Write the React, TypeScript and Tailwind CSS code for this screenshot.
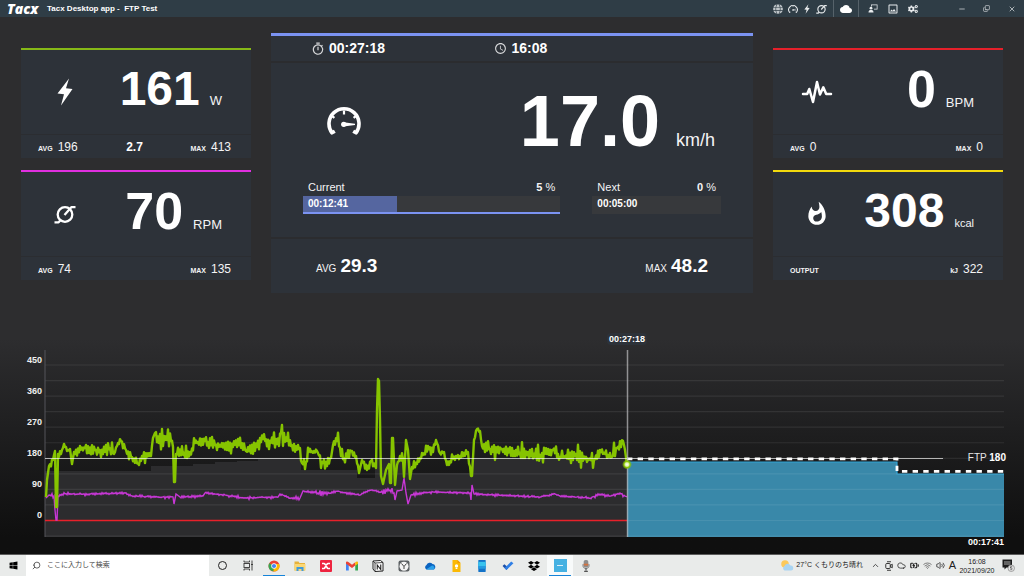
import type { ReactNode } from "react";
import {
  MdCloud,
  MdOutlineInsertPhoto,
  MdOutlineTimer,
  MdSchedule,
  MdWhatshot,
} from "react-icons/md";
import { FaCogs, FaDropbox, FaGlobe, FaWindows } from "react-icons/fa";
import {
  BatteryCharging,
  ChevronUp,
  Cloud,
  Copy,
  Minus,
  Search,
  Volume2,
  Wifi,
  X,
} from "lucide-react";

// ---------------------------------------------------------------------------
// Icons
// ---------------------------------------------------------------------------

type IconProps = { className?: string };

function BoltIcon({ className }: IconProps) {
  return (
    <svg viewBox="0 0 16 28" className={className} fill="currentColor" aria-hidden="true">
      <path d="M12 0.5 L0.5 15.5 L7 16.3 L4 27.5 L15.5 11 L9 10.2 Z" />
    </svg>
  );
}

function CrankIcon({ className }: IconProps) {
  return (
    <svg viewBox="0 0 22 20" className={className} fill="none" stroke="currentColor" strokeWidth="2.3" strokeLinejoin="round" aria-hidden="true">
      <circle cx="11" cy="10.5" r="7.3" />
      <path d="M10.5 11 L17.3 3.2 H21.5" />
      <path d="M6.3 16.5 L4.6 18.3 H0.5" />
    </svg>
  );
}

function GaugeIcon({ className }: IconProps) {
  return (
    <svg viewBox="0 0 34 28" className={className} fill="none" stroke="currentColor" aria-hidden="true">
      <path d="M7.8 24.2 L5 25.8 A15 15 0 1 1 29 25.8 L26.2 24.2" strokeWidth="3.6" strokeLinejoin="round" />
      <path d="M17 3.5 V7.5 M7.4 10.8 L5 9 M26.6 10.8 L29 9" strokeWidth="2.2" />
      <circle cx="16.7" cy="17.3" r="2.6" fill="currentColor" stroke="none" />
      <path d="M16.5 15.3 L28 16.7 V18.1 L16.5 19.5 Z" fill="currentColor" stroke="none" />
    </svg>
  );
}

function PulseIcon({ className }: IconProps) {
  return (
    <svg viewBox="0 0 32 24" className={className} fill="none" stroke="currentColor" strokeWidth="2.5" strokeLinecap="round" strokeLinejoin="round" aria-hidden="true">
      <path d="M2 14 H6.2 L8.3 9 L12 22 L16 2 L19 14.5 L22.3 7.3 L25.2 14 H30" />
    </svg>
  );
}

function TrainerIcon({ className }: IconProps) {
  return (
    <svg viewBox="0 0 20 18" className={className} fill="currentColor" aria-hidden="true">
      <path d="M6 1 H19 V11 H12 V9.5 H17.5 V2.5 H7.5 V5 H6 Z" />
      <circle cx="6" cy="8.3" r="2.8" />
      <path d="M1 17 C1 13 3 12 6 12 C9 12 11 13 11 17 Z" />
    </svg>
  );
}

function ChromeIcon() {
  return (
    <svg viewBox="0 0 24 24" className="size-3" aria-hidden="true">
      <circle cx="12" cy="12" r="11" fill="#ea4335" />
      <path d="M12 12 L2.5 6.5 A11 11 0 0 0 11 23 Z" fill="#34a853" />
      <path d="M12 12 L11 23 A11 11 0 0 0 22.4 8 L12 8 Z" fill="#fbbc04" />
      <circle cx="12" cy="12" r="5.5" fill="#fff" />
      <circle cx="12" cy="12" r="4.2" fill="#4285f4" />
    </svg>
  );
}

function ExplorerIcon() {
  return (
    <svg viewBox="0 0 24 22" className="size-3" aria-hidden="true">
      <path d="M1 2 H9 L11 5 H22 V20 H1 Z" fill="#e8b33c" />
      <path d="M1 7 H23 V20 H1 Z" fill="#fbd775" />
      <path d="M5 21 V13 H19 V21 H15 V17 H9 V21 Z" fill="#3f9bdc" />
    </svg>
  );
}

function MindIcon() {
  return (
    <svg viewBox="0 0 24 24" className="size-3" aria-hidden="true">
      <rect width="24" height="24" rx="2" fill="#ee2440" />
      <path d="M4 7 H8 C10 7 10 10 12 10 C14 10 14 7 16 7 H20 M4 17 H8 C10 17 10 13 12 13 C14 13 14 17 16 17 H20" fill="none" stroke="#fff" strokeWidth="3.4" />
    </svg>
  );
}

function GmailIcon() {
  return (
    <svg viewBox="0 0 24 18" className="h-2.5 w-3" aria-hidden="true">
      <path d="M0 2 V18 H5.5 V7 Z" fill="#4285f4" />
      <path d="M24 2 V18 H18.5 V7 Z" fill="#34a853" />
      <path d="M0 2 C0 0 3 -1 5.5 1.5 L12 6.5 L18.5 1.5 V8 L12 13 L0 4.5 Z" fill="#ea4335" />
      <path d="M18.5 1.5 C21 -1 24 0 24 2 V4.5 L18.5 8.5 Z" fill="#fbbc04" />
    </svg>
  );
}

function NotionIcon() {
  return (
    <svg viewBox="0 0 24 24" className="size-3" aria-hidden="true">
      <path d="M2 2 L17 1 L22 5 V22 L6 23 L2 18 Z" fill="#fff" stroke="#222" strokeWidth="2" />
      <path d="M2 2 L6 6 L22 5 M6 6 V23" fill="none" stroke="#222" strokeWidth="1.6" />
      <path d="M10.5 19 V10 L17.5 19 V9" fill="none" stroke="#222" strokeWidth="2.2" />
    </svg>
  );
}

function AlarmAppIcon() {
  return (
    <svg viewBox="0 0 24 24" className="size-3" aria-hidden="true">
      <rect x="1" y="1" width="22" height="22" rx="4" fill="#5c6063" />
      <circle cx="12" cy="12.5" r="9" fill="#f4f4f4" />
      <path d="M7 7 L12 13 L17 7 M12 13 V18" fill="none" stroke="#444" strokeWidth="2" />
    </svg>
  );
}

function OneDriveIcon() {
  return (
    <svg viewBox="0 0 24 16" className="h-2 w-3" aria-hidden="true">
      <path d="M5 15 A5 5 0 0 1 5 6 A7 7 0 0 1 17 4 A6 6 0 0 1 20 15 Z" fill="#0a63c0" />
      <path d="M4 15 L16 7 A5 5 0 0 1 20 15 Z" fill="#2aa0ea" />
    </svg>
  );
}

function KeepIcon() {
  return (
    <svg viewBox="0 0 18 24" className="h-3 w-2.5" aria-hidden="true">
      <path d="M2 0 H12 L18 6 V24 H2 Z" fill="#fbb904" />
      <path d="M12 0 L18 6 H12 Z" fill="#f29a00" />
      <circle cx="10" cy="12" r="3.4" fill="#fff" />
      <rect x="8.3" y="16" width="3.4" height="2" fill="#fff" />
    </svg>
  );
}

function PhoneIcon() {
  return (
    <svg viewBox="0 0 16 26" className="h-3 w-2" aria-hidden="true">
      <rect width="16" height="26" rx="1" fill="#1473c8" />
      <rect y="4" width="16" height="10" fill="#39c3ee" />
      <rect y="13" width="16" height="6" fill="#259be0" />
    </svg>
  );
}

function TodoIcon() {
  return (
    <svg viewBox="0 0 26 22" className="h-2.5 w-3" aria-hidden="true">
      <path d="M1 11 L5 7 L14 15 L9.5 20 Z" fill="#1b4fa8" />
      <path d="M9.5 20 L5.5 15.5 L20 1 L25 5 Z" fill="#2f7fe6" />
    </svg>
  );
}

function MicIcon() {
  return (
    <svg viewBox="0 0 16 26" className="h-3 w-2" aria-hidden="true">
      <rect x="3" y="0" width="10" height="16" rx="4" fill="#8d8d8d" />
      <rect x="3" y="8" width="10" height="4" fill="#d4723f" />
      <path d="M1.5 9 V13 C1.5 20 14.5 20 14.5 13 V9" fill="none" stroke="#777" strokeWidth="2" />
      <path d="M8 18 V23 M4 24.5 H12" stroke="#555" strokeWidth="2.6" />
    </svg>
  );
}

function TaskViewIcon() {
  return (
    <svg viewBox="0 0 22 22" className="size-[11px]" fill="none" stroke="#333" strokeWidth="1.8" aria-hidden="true">
      <rect x="2" y="7" width="11" height="8" />
      <path d="M2 1 V4 H13 V1 M2 21 V18 H13 V21 M18 1 V21 M16 9 H20" />
    </svg>
  );
}

function WeatherIcon() {
  return (
    <svg viewBox="0 0 26 22" className="h-[11px] w-3.5" aria-hidden="true">
      <circle cx="9" cy="8" r="7.5" fill="#fbc95c" />
      <path d="M8 21 A5 5 0 0 1 8 12 A6.5 6.5 0 0 1 20 11 A5 5 0 0 1 21 21 Z" fill="#a9d4f2" />
    </svg>
  );
}

function MeetIcon() {
  return (
    <svg viewBox="0 0 16 20" className="h-2.5 w-2" fill="none" stroke="#222" strokeWidth="1.8" aria-hidden="true">
      <path d="M4 1.5 H12 M4 18.5 H12" />
      <rect x="1.5" y="5" width="9" height="10" rx="2" />
      <path d="M10.5 9 L14.5 6.5 V13.5 L10.5 11" />
    </svg>
  );
}

function ActionCenterIcon() {
  return (
    <svg viewBox="0 0 26 26" className="size-[13px]" aria-hidden="true">
      <path d="M1 1 H20 V17 H9 L5 21 V17 H1 Z" fill="#1c1c1c" />
      <path d="M4 6 H17 M4 10 H17" stroke="#e9ebea" strokeWidth="1.4" />
      <circle cx="18.5" cy="18.5" r="6.5" fill="#e4e4e4" stroke="#777" strokeWidth="1.2" />
      <path d="M20.5 15.5 H17 V18.2 C21.5 17.6 21.5 22 16.8 21.3" fill="none" stroke="#333" strokeWidth="1.3" />
    </svg>
  );
}

// ---------------------------------------------------------------------------
// Title bar
// ---------------------------------------------------------------------------

function BarButton({ label, children, className = "w-5" }: { label: string; children: ReactNode; className?: string }) {
  return (
    <button type="button" aria-label={label} className={`flex h-full items-center justify-center ${className}`}>
      {children}
    </button>
  );
}

function TitleBar() {
  return (
    <header className="flex h-[17px] items-center bg-[#2f3d46] text-white">
      <span className="ml-[7px] w-10 font-['Open_Sans',sans-serif] text-[14px] leading-4 font-extrabold italic">
        Tacx
      </span>
      <h1 className="text-[8px] font-bold whitespace-pre">Tacx Desktop app -  FTP Test</h1>
      <div className="ml-auto flex h-full items-center text-[#e8ebed]">
        <div className="flex h-full items-center pr-1">
          <BarButton label="Network" className="w-[14px]"><FaGlobe className="size-2.5 text-[#bfc5c9]" /></BarButton>
          <BarButton label="Speed sensor" className="w-[15px]"><GaugeIcon className="h-2 w-2.5" /></BarButton>
          <BarButton label="Power sensor" className="w-[14px]"><BoltIcon className="h-2.5 w-1.5" /></BarButton>
          <BarButton label="Cadence sensor" className="w-[15px]"><CrankIcon className="h-2.5 w-[11px]" /></BarButton>
        </div>
        <div className="flex h-full items-center border-x border-[#56626a] px-0.5">
          <BarButton label="Cloud sync"><MdCloud className="size-3 text-white" /></BarButton>
        </div>
        <div className="flex h-full items-center pr-[26px] pl-1">
          <BarButton label="Trainer"><TrainerIcon className="h-[9px] w-2.5" /></BarButton>
          <BarButton label="Screenshot"><MdOutlineInsertPhoto className="size-3" /></BarButton>
          <BarButton label="Settings"><FaCogs className="size-2.5" /></BarButton>
        </div>
        <BarButton label="Minimize" className="w-[25px]"><Minus className="size-2" /></BarButton>
        <BarButton label="Restore" className="w-[25px]"><Copy className="size-[7px] -scale-x-100 rotate-180" /></BarButton>
        <BarButton label="Close" className="w-[25px]"><X className="size-2" /></BarButton>
      </div>
    </header>
  );
}

// ---------------------------------------------------------------------------
// Metric cards
// ---------------------------------------------------------------------------

function Stat({ label, value = "\u00a0" }: { label: string; value?: string }) {
  return (
    <span className="flex items-baseline gap-[5px]">
      <span className="text-[7px] font-bold">{label}</span>
      <span className="text-[12px]">{value}</span>
    </span>
  );
}

type MetricCardProps = {
  accent: string;
  icon: ReactNode;
  value: string;
  valueSize?: string;
  unit: string;
  unitSize?: string;
  left: ReactNode;
  middle?: string;
  right: ReactNode;
};

function MetricCard({
  accent,
  icon,
  value,
  valueSize = "text-[52px]",
  unit,
  unitSize = "text-[13px]",
  left,
  middle,
  right,
}: MetricCardProps) {
  return (
    <section className={`border-t-2 bg-[#2d3239] text-[#f4f4f5] ${accent}`}>
      <div className="flex h-[84px] items-center pr-[29px] pl-7">
        <div className="flex w-8 justify-center text-white">{icon}</div>
        <p className="-mt-1.5 ml-auto flex items-baseline gap-2.5">
          <span className={`leading-[52px] font-bold text-white ${valueSize}`}>{value}</span>
          <span className={unitSize}>{unit}</span>
        </p>
      </div>
      <div className="grid h-6 grid-cols-[1fr_auto_1fr] items-center border-t border-[#2b2d31] pr-5 pl-[17px]">
        {left}
        <span className="text-[12px] font-bold text-white">{middle}</span>
        <span className="justify-self-end">{right}</span>
      </div>
    </section>
  );
}

function Interval({ name, grade, time, progress }: { name: string; grade: string; time: string; progress?: number }) {
  return (
    <div>
      <div className="flex items-baseline justify-between px-[5px] text-[11px] leading-4">
        <span>{name}</span>
        <span>
          <b>{grade}</b> %
        </span>
      </div>
      <div className={`relative mt-px h-[18px] bg-[#37393c] ${progress ? "border-b-2 border-[#7b93f2]" : ""}`}>
        {progress && <div className="absolute inset-y-0 left-0 bg-[#5566a0]" style={{ width: `${progress}%` }} />}
        <span className="relative block px-[5px] text-[10px] leading-4 font-bold text-white">{time}</span>
      </div>
    </div>
  );
}

function SpeedPanel() {
  return (
    <section className="border-t-[3px] border-[#7b93f2] bg-[#2d3239] text-[#f4f4f5]">
      <div className="grid h-[27px] grid-cols-[183fr_258fr] items-center border-b-2 border-[#2b2c2f] pl-10 font-bold text-white">
        <span className="flex items-center gap-1 text-[14px]">
          <MdOutlineTimer className="size-[14px] text-[#d8d9db]" />
          00:27:18
        </span>
        <span className="flex items-center gap-1 text-[14px]">
          <MdSchedule className="size-[13px] text-[#d8d9db]" />
          16:08
        </span>
      </div>
      <div className="h-[176px] border-b-2 border-[#2b2c2f]">
        <div className="flex h-[116px] items-center pr-[38px] pl-14">
          <GaugeIcon className="h-7 w-[34px] text-white" />
          <p className="ml-auto flex items-baseline gap-4">
            <span className="text-[72px] leading-[72px] font-bold text-white">17.0</span>
            <span className="text-[18px]">km/h</span>
          </p>
        </div>
        <div className="grid grid-cols-[2fr_1fr] gap-8 px-8">
          <Interval name="Current" grade="5" time="00:12:41" progress={36.5} />
          <Interval name="Next" grade="0" time="00:05:00" />
        </div>
      </div>
      <div className="flex h-[54px] items-center justify-between px-[45px]">
        <span className="flex items-baseline gap-1 text-[10px]">
          AVG <b className="text-[19px] text-white">29.3</b>
        </span>
        <span className="flex items-baseline gap-1 text-[10px]">
          MAX <b className="text-[19px] text-white">48.2</b>
        </span>
      </div>
    </section>
  );
}

// ---------------------------------------------------------------------------
// Workout chart
// ---------------------------------------------------------------------------

// [x, y, noise]: noise is how far the trace wanders around the line from here to the next point
type Point = [number, number, number?];

const POWER: Point[] = [
  [1, 147], [2, 130], [4, 116, 4], [8, 110, 4], [10, 101], [11, 157], [12, 157], [13, 104, 3], [16, 104, 4],
  [19, 94, 3], [22, 101, 5], [25, 99], [27, 114], [29, 102, 6], [40, 98, 6], [50, 100, 5], [58, 104, 5],
  [61, 95, 5], [69, 104, 4], [73, 93, 3], [76, 91, 4], [81, 100, 4], [87, 107, 5], [94, 115, 5], [97, 106, 4],
  [106, 106, 2], [108, 88], [110, 83, 6], [114, 93, 10], [119, 86, 8], [126, 91, 7], [128, 97], [129, 132],
  [130, 132], [131, 104, 8], [145, 102, 8], [150, 93, 6], [160, 91, 7], [170, 95, 5], [188, 97, 5], [193, 89, 5],
  [201, 101, 6], [212, 97, 5], [218, 89, 6], [232, 94, 4], [236, 83, 6], [246, 96, 5], [255, 98, 6], [257, 113, 9],
  [261, 112, 9], [264, 102, 4], [272, 101, 5], [277, 112, 4], [281, 112, 6], [286, 108, 3], [288, 95, 5],
  [292, 91, 6], [299, 108, 6], [306, 101, 5], [311, 106, 2], [314, 123], [317, 110, 4], [322, 120, 5],
  [326, 111, 3], [330, 116, 3], [331, 118], [332, 60], [333, 29], [334, 31], [335, 70], [336, 126], [338, 134],
  [341, 120], [344, 114], [345, 133], [346, 133], [347, 88], [348, 88], [350, 135], [352, 115, 3], [355, 106, 5],
  [358, 110], [359, 127], [361, 90], [363, 100], [365, 129], [367, 117, 3], [372, 114, 4], [378, 105, 4],
  [383, 96, 6], [388, 102, 4], [391, 90, 4], [395, 103, 4], [399, 102, 3], [402, 115, 4], [408, 109, 3],
  [415, 106, 3], [423, 102, 4], [426, 126], [427, 126], [429, 90, 2], [432, 79, 2], [435, 81, 3], [437, 96, 8],
  [445, 99, 6], [457, 99, 5], [475, 103, 6], [495, 105, 6], [508, 100, 7], [515, 107, 7], [530, 106, 8],
  [540, 109, 8], [549, 110, 6], [555, 100, 3], [560, 104, 4], [567, 107, 6], [572, 98, 4], [578, 91, 2],
  [580, 100], [582, 115],
];

const CADENCE: Point[] = [
  [1, 148], [4, 145, 2], [9, 146, 3], [11, 170], [12, 170], [13, 146, 1], [20, 144, 1], [46, 144, 1], [80, 143, 1],
  [86, 146, 1], [115, 147, 1], [128, 147], [129, 154], [131, 144], [135, 147, 1], [158, 146], [160, 143, 1],
  [180, 145, 1], [198, 148, 1], [233, 147], [235, 144, 1], [245, 148, 1], [255, 148], [258, 141, 1], [273, 143, 2],
  [285, 143, 1], [293, 141, 1], [300, 143, 1], [315, 145, 1], [325, 140, 1], [335, 142, 2], [345, 140, 2],
  [349, 143], [350, 150], [352, 141, 1], [357, 140], [359, 128], [361, 143], [363, 154], [366, 145, 1],
  [385, 142, 1], [425, 143], [426, 150], [427, 135], [429, 144, 1], [455, 145, 1], [495, 147, 1], [510, 144, 1],
  [515, 146, 1], [545, 148, 2], [555, 144, 1], [565, 146, 1], [575, 143, 1], [582, 147],
];

function toPath(points: Point[], seed: number) {
  let state = seed;
  const random = () => {
    state = (state * 16807) % 2147483647;
    return state / 2147483647;
  };

  const parts: string[] = [];
  points.forEach(([x, y, noise = 0], i) => {
    const next = points[i + 1];
    parts.push(`${x},${y}`);
    if (!next || !noise) return;
    for (let px = x + 1; px < next[0]; px++) {
      const t = (px - x) / (next[0] - x);
      const side = px % 2 === 0 ? 1 : -1;
      const wander = side * random() * noise * (random() > 0.85 ? 1.9 : 1);
      parts.push(`${px},${(y + (next[1] - y) * t + wander).toFixed(1)}`);
    }
  });
  return `M${parts.join(" L")}`;
}

const POWER_PATH = toPath(POWER, 4211);
const CADENCE_PATH = toPath(CADENCE, 977);

const GRID_LINES = Array.from({ length: 12 }, (_, i) => 15 + i * 15.55);
const AXIS_LABELS = [450, 360, 270, 180, 90, 0];

function WorkoutChart() {
  return (
    <section className="mt-10 flex pr-5">
      <ul className="w-[45px] pt-3 pr-[3px] text-right text-[9px] font-bold text-[#efefef]">
        {AXIS_LABELS.map((label) => (
          <li key={label} className="h-[31px] leading-[31px]">
            {label}
          </li>
        ))}
      </ul>
      <div className="relative flex-1">
        <div className="h-[17px]">
          <span className="absolute left-[60.7%] -translate-x-1/2 rounded-sm bg-[#2d3239] px-0.5 text-[9px] leading-3 font-bold text-white">
            00:27:18
          </span>
        </div>
        <svg viewBox="0 0 959 187" preserveAspectRatio="none" className="block h-[187px] w-full overflow-visible" role="img" aria-label="Workout graph">
          <defs>
            <radialGradient id="marker">
              <stop offset="0" stopColor="#fff" />
              <stop offset="0.35" stopColor="#dff2a8" />
              <stop offset="0.6" stopColor="#8ac800" />
              <stop offset="1" stopColor="#8ac800" stopOpacity="0" />
            </radialGradient>
          </defs>

          {/* Finished blocks */}
          <path
            d="M0 187 V121 H106 V116 H148 V114 H170 V112 H192 V111 H213 V109 H256 V120 H312 V128 H330 V109 H366 V123 H426 V109 H582 V187 Z"
            fill="#2c2c2e"
          />
          {/* Blocks still to ride */}
          <path d="M582 187 V112 H852 V124 H959 V187 Z" fill="#3988a9" />
          <path d="M582 112 H852 V124 H959" fill="none" stroke="#31a3d6" strokeWidth="1.2" />

          {GRID_LINES.map((y) => (
            <line key={y} x1="0" x2="959" y1={y} y2={y} stroke="#fff" strokeOpacity="0.08" strokeWidth="1.2" />
          ))}
          <line x1="0" x2="0" y1="0" y2="187" stroke="#55555a" />

          <line x1="0" x2="582" y1="170.5" y2="170.5" stroke="#e8202a" strokeWidth="1.3" />
          <path d={CADENCE_PATH} fill="none" stroke="#c837d6" strokeWidth="1.4" />
          <path d={POWER_PATH} fill="none" stroke="#86c400" strokeWidth="2.4" strokeLinejoin="round" />
          <line x1="0" x2="898" y1="108.5" y2="108.5" stroke="#fff" strokeOpacity="0.65" />

          <path d="M582 108.8 H852 V121.4 H959" fill="none" stroke="#fff" strokeWidth="2.8" strokeDasharray="5.4 5.25" />
          <line x1="582.5" x2="582.5" y1="0" y2="187" stroke="#b5b5b8" strokeOpacity="0.75" strokeWidth="1.5" />
          <circle cx="582" cy="114.5" r="5" fill="url(#marker)" />
        </svg>
        <span className="absolute top-[119px] -right-0.5 text-[10px] leading-3 text-[#e6e6e6]">
          FTP <b className="text-white">180</b>
        </span>
        <p className="text-right text-[9px] leading-[10px] font-bold text-white">00:17:41</p>
      </div>
    </section>
  );
}

// ---------------------------------------------------------------------------
// Windows taskbar
// ---------------------------------------------------------------------------

const APPS: { name: string; icon: ReactNode; open?: boolean; active?: boolean }[] = [
  { name: "Cortana", icon: <span className="size-[9px] rounded-full border-[1.5px] border-[#222]" /> },
  { name: "Task view", icon: <TaskViewIcon /> },
  { name: "Chrome", icon: <ChromeIcon />, open: true },
  { name: "Explorer", icon: <ExplorerIcon /> },
  { name: "XMind", icon: <MindIcon /> },
  { name: "Gmail", icon: <GmailIcon /> },
  { name: "Notion", icon: <NotionIcon /> },
  { name: "Alarms", icon: <AlarmAppIcon /> },
  { name: "OneDrive", icon: <OneDriveIcon /> },
  { name: "Keep", icon: <KeepIcon /> },
  { name: "Your Phone", icon: <PhoneIcon /> },
  { name: "To Do", icon: <TodoIcon /> },
  { name: "Dropbox", icon: <FaDropbox className="size-3 text-black" /> },
  {
    name: "Tacx",
    icon: (
      <span className="flex size-[13px] items-center justify-center bg-[#45b1e2]">
        <span className="h-px w-1.5 bg-white/80" />
      </span>
    ),
    open: true,
    active: true,
  },
  { name: "Voice recorder", icon: <MicIcon /> },
];

function Taskbar() {
  return (
    <footer className="flex h-[22px] items-stretch border-t border-[#5c5c5c] bg-[#e9ebea] font-['Liberation_Sans','Noto_Sans_CJK_JP',sans-serif] text-[#222]">
      <button type="button" aria-label="Start" className="flex w-[26px] items-center justify-center">
        <FaWindows className="size-[9px] text-black" />
      </button>
      <label className="flex w-[183px] items-center gap-1.5 bg-white pl-1.5">
        <Search className="size-[9px] shrink-0 -scale-x-100 text-[#333]" />
        <input
          type="text"
          aria-label="Search"
          placeholder="ここに入力して検索"
          className="w-full bg-transparent text-[7px] outline-none placeholder:text-[#444]"
        />
      </label>
      <nav className="flex">
        {APPS.map((app) => (
          <button
            key={app.name}
            type="button"
            aria-label={app.name}
            className={`relative flex w-[26px] items-center justify-center ${app.active ? "bg-[#f8fafa]" : ""}`}
          >
            {app.icon}
            {app.open && <span className="absolute inset-x-0.5 bottom-0 h-px bg-[#1583d8]" />}
          </button>
        ))}
      </nav>
      <div className="ml-auto flex items-center text-[7px]">
        <WeatherIcon />
        <span className="ml-0.5">27°C</span>
        <span className="mr-1.5 ml-0.5">くもりのち晴れ</span>
        <span className="flex w-[13px] justify-center"><ChevronUp className="size-[9px]" /></span>
        <span className="flex w-[13px] justify-center"><MeetIcon /></span>
        <span className="flex w-[13px] justify-center"><Cloud className="size-[9px]" /></span>
        <span className="flex w-[13px] justify-center"><BatteryCharging className="size-[9px]" strokeWidth={3} /></span>
        <span className="flex w-[13px] justify-center"><Wifi className="size-[9px] text-[#555]" /></span>
        <span className="flex w-[13px] justify-center"><Volume2 className="size-[9px]" /></span>
        <span className="flex w-[11px] justify-center text-[11px]">A</span>
        <p className="w-[38px] text-center leading-[9px]">
          16:08
          <br />
          2021/09/20
        </p>
        <span className="mr-2 ml-1 flex w-4 justify-center"><ActionCenterIcon /></span>
      </div>
    </footer>
  );
}

export default function App() {
  return (
    <div className="flex min-h-screen flex-col font-['Liberation_Sans',Arial,sans-serif]">
      <TitleBar />
      <main className="flex-1 bg-linear-to-b from-[#2d2d2f] from-60% to-[#0f0f0f] to-97%">
        <div className="grid grid-cols-[230fr_482fr_230fr] items-start gap-5 px-[21px] pt-4">
          <div className="mt-[15px] flex flex-col gap-3">
            <MetricCard
              accent="border-[#86b817]"
              icon={<BoltIcon className="h-7 w-4" />}
              value="161"
              valueSize="text-[48px]"
              unit="W"
              left={<Stat label="AVG" value="196" />}
              middle="2.7"
              right={<Stat label="MAX" value="413" />}
            />
            <MetricCard
              accent="border-[#e02fe0]"
              icon={<CrankIcon className="h-5 w-[22px]" />}
              value="70"
              unit="RPM"
              left={<Stat label="AVG" value="74" />}
              right={<Stat label="MAX" value="135" />}
            />
          </div>
          <SpeedPanel />
          <div className="mt-[15px] flex flex-col gap-3">
            <MetricCard
              accent="border-[#e5202a]"
              icon={<PulseIcon className="h-6 w-8" />}
              value="0"
              unit="BPM"
              left={<Stat label="AVG" value="0" />}
              right={<Stat label="MAX" value="0" />}
            />
            <MetricCard
              accent="border-[#f2d90d]"
              icon={<MdWhatshot className="size-[26px]" />}
              value="308"
              valueSize="text-[48px]"
              unit="kcal"
              unitSize="text-[11px]"
              left={<Stat label="OUTPUT" />}
              right={<Stat label="kJ" value="322" />}
            />
          </div>
        </div>
        <WorkoutChart />
      </main>
      <Taskbar />
    </div>
  );
}
